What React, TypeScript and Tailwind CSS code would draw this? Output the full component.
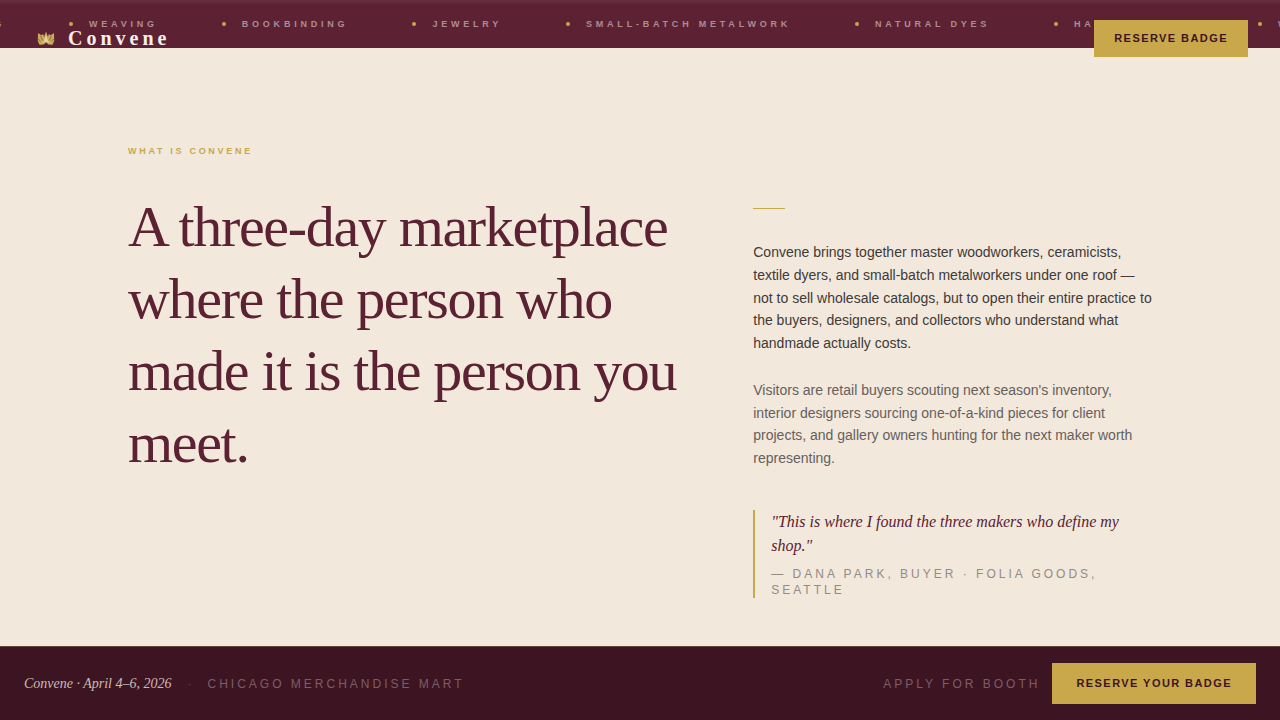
const crafts = [
  'Hand Painting',
  'Weaving',
  'Bookbinding',
  'Jewelry',
  'Small-Batch Metalwork',
  'Natural Dyes',
  'Hand Painting',
  'Weaving',
];

function LogoMark() {
  return (
    <svg viewBox="0 0 28 28" className="size-7" fill="none" aria-hidden="true">
      <path
        d="M6 8 L9.300 10.300 L11.200 9 L12 12 L14 6.500 L16 12 L16.800 9 L18.700 10.300 L22 8 L22.200 16 L20.500 19.800 L16.500 19.500 L14 17.600 L11.500 19.500 L7.500 19.800 L5.800 16 Z"
        fill="#c9ac5c"
      />
      <path
        d="M8.600 11 L10.200 14.500 L12 16.500 M19.400 11 L17.800 14.500 L16 16.500 M6 13.500 L8.500 16.500 M22 13.500 L19.500 16.500"
        stroke="#5c2233"
        strokeWidth="0.500"
      />
      <path d="M14 9.500 L15.300 14 L17.500 17.500 L14 16.800 L10.500 17.500 L12.700 14 Z" fill="#e6d3a2" />
    </svg>
  );
}

function Ticker() {
  return (
    <div className="h-12 overflow-hidden bg-linear-to-b from-[#66303f] to-[#5c2233] to-[5px]">
      <ul className="-ml-[135px] flex h-full w-max items-center gap-16">
        {crafts.map((craft, i) => (
          <li key={i} className="flex shrink-0 items-center gap-4">
            <span className="size-1 rounded-full bg-[#c8a84b]" />
            <span className="text-[9px] leading-4 font-bold tracking-[0.42em] whitespace-nowrap text-[#ae8c93] uppercase">
              {craft}
            </span>
          </li>
        ))}
      </ul>
    </div>
  );
}

function Nav() {
  return (
    <nav className="absolute inset-x-0 top-0 z-10 flex items-center justify-between px-8 py-5">
      <a href="#top" className="flex items-center gap-2">
        <LogoMark />
        <span className="pb-0.5 font-['Liberation_Serif',serif] text-xl leading-6 font-bold tracking-[0.2em] text-[#f7eee6]">
          Convene
        </span>
      </a>
      <button
        type="button"
        className="bg-[#c8a84b] px-5 py-3 text-[11px] leading-[13px] font-bold tracking-[0.13em] text-[#3d1522] uppercase"
      >
        Reserve Badge
      </button>
    </nav>
  );
}

function About() {
  return (
    <section className="mx-auto w-full max-w-5xl pt-24 pb-12">
      <p className="mb-8 text-[9px] leading-[15px] font-bold tracking-[0.3em] text-[#c8a84b] uppercase">
        What is Convene
      </p>
      <div className="grid grid-cols-[7fr_5fr] gap-[67px]">
        <h1 className="font-['Liberation_Serif',serif] text-[58px] leading-[72px] tracking-[-0.023em] text-[#5c2233]">
          A three-day marketplace where the person who made it is the person you meet.
        </h1>
        <div className="pt-[17px]">
          <div className="mb-8 h-px w-8 bg-[#c8a84b]" />
          <p className="mb-6 text-sm leading-relaxed text-[#403a38]">
            Convene brings together master woodworkers, ceramicists, textile dyers, and small-batch
            metalworkers under one roof — not to sell wholesale catalogs, but to open their entire
            practice to the buyers, designers, and collectors who understand what handmade actually
            costs.
          </p>
          <p className="mb-10 text-sm leading-relaxed text-[#66605c]">
            Visitors are retail buyers scouting next season's inventory, interior designers sourcing
            one-of-a-kind pieces for client projects, and gallery owners hunting for the next maker
            worth representing.
          </p>
          <figure className="border-l-2 border-[#c8a84b] pl-4">
            <blockquote className="font-['Liberation_Serif',serif] text-base leading-6 text-[#5c2233] italic">
              "This is where I found the three makers who define my shop."
            </blockquote>
            <figcaption className="mt-2 text-xs leading-4 tracking-[0.25em] text-[#938c86] uppercase">
              — Dana Park, Buyer · Folia Goods, Seattle
            </figcaption>
          </figure>
        </div>
      </div>
    </section>
  );
}

function BookingBar() {
  return (
    <footer className="sticky bottom-0 flex items-center justify-between border-t border-[#64453a] bg-[#3d1522] px-6 py-4">
      <div className="flex items-center gap-4">
        <span className="font-['Liberation_Serif',serif] text-sm text-[#cdb9b4] italic">
          Convene · April 4–6, 2026
        </span>
        <span className="text-xs text-[#64404a]">·</span>
        <span className="text-xs tracking-[0.25em] text-[#7d5c66] uppercase">
          Chicago Merchandise Mart
        </span>
      </div>
      <div className="flex items-center gap-3">
        <a href="#booth" className="text-xs tracking-[0.25em] text-[#7d5c66] uppercase">
          Apply for Booth
        </a>
        <button
          type="button"
          className="bg-[#c8a84b] px-6 py-3.5 text-[11px] leading-[13px] font-bold tracking-[0.13em] text-[#3d1522] uppercase"
        >
          Reserve Your Badge
        </button>
      </div>
    </footer>
  );
}

export default function App() {
  return (
    <div
      id="top"
      className="relative flex min-h-screen flex-col bg-[#f2e8dc] font-['Liberation_Sans',Arial,sans-serif]"
    >
      <Ticker />
      <Nav />
      <main className="flex-1">
        <About />
      </main>
      <BookingBar />
    </div>
  );
}
